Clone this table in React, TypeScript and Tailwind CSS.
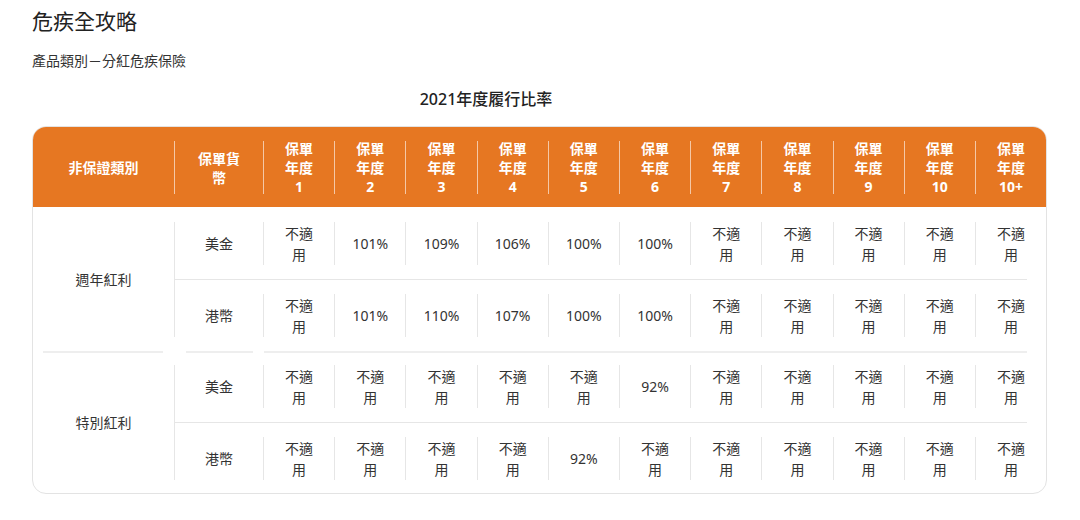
import React from "react";

const NA = "不適用";

type Row = { currency: string; values: string[] };
type Group = { label: string; rows: Row[] };

const years = ["1", "2", "3", "4", "5", "6", "7", "8", "9", "10", "10+"];

const groups: Group[] = [
  {
    label: "週年紅利",
    rows: [
      { currency: "美金", values: [NA, "101%", "109%", "106%", "100%", "100%", NA, NA, NA, NA, NA] },
      { currency: "港幣", values: [NA, "101%", "110%", "107%", "100%", "100%", NA, NA, NA, NA, NA] },
    ],
  },
  {
    label: "特別紅利",
    rows: [
      { currency: "美金", values: [NA, NA, NA, NA, NA, "92%", NA, NA, NA, NA, NA] },
      { currency: "港幣", values: [NA, NA, NA, NA, "92%", NA, NA, NA, NA, NA, NA] },
    ],
  },
];

function Cell({ value }: { value: string }) {
  // "不適用" wraps after two characters in the narrow year columns
  return (
    <div className="flex-1 h-[43px] border-l border-[#e6e6e6] flex items-center justify-center text-center leading-[21px]">
      {value === NA ? (
        <span>
          不適
          <br />用
        </span>
      ) : (
        value
      )}
    </div>
  );
}

function DataRow({ row }: { row: Row }) {
  return (
    <div className="flex">
      <div className="w-[88px] h-[43px] flex items-center justify-center">{row.currency}</div>
      {row.values.map((v, i) => (
        <Cell key={i} value={v} />
      ))}
    </div>
  );
}

function GroupBlock({ group }: { group: Group }) {
  return (
    <div className="flex">
      <div className="w-[141px] flex items-center justify-center">{group.label}</div>
      <div className="flex-1 border-l border-[#e6e6e6] flex flex-col">
        <DataRow row={group.rows[0]} />
        <div className="h-[14px]" />
        <div className="h-px bg-[#e6e6e6] mr-[19px]" />
        <div className="h-[14px]" />
        <DataRow row={group.rows[1]} />
      </div>
    </div>
  );
}

export default function App() {
  return (
    <div
      className="min-h-screen bg-white pl-[32px] pt-[7px] text-[#222]"
      style={{ fontFamily: '"Noto Sans", "Noto Sans CJK TC", sans-serif' }}
    >
      <h1 className="text-[21px] leading-[28px] font-normal">危疾全攻略</h1>
      <p className="mt-[16px] text-[14px] leading-[20px] text-[#333]">產品類別－分紅危疾保險</p>
      <div className="mt-[17px] w-[908px] text-center text-[16px] leading-[22px] font-medium">
        2021年度履行比率
      </div>

      <div className="mt-[16px] w-[1015px] rounded-[14px] border border-[#e3e3e3] overflow-hidden text-[14px] text-[#333]">
        {/* header */}
        <div className="flex bg-[#e67722] pt-[14px] pb-[13px] text-white font-bold">
          <div className="w-[141px] h-[53px] flex items-center justify-center">非保證類別</div>
          <div className="w-[89px] h-[53px] border-l border-white/60 flex items-center justify-center text-center leading-[19px]">
            <span>
              保單貨
              <br />幣
            </span>
          </div>
          {years.map((y) => (
            <div
              key={y}
              className="flex-1 h-[53px] border-l border-white/60 flex items-center justify-center text-center leading-[19px]"
            >
              <span>
                保單
                <br />
                年度
                <br />
                {y}
              </span>
            </div>
          ))}
        </div>

        {/* body */}
        <div className="pt-[15px] pb-[13px]">
          <GroupBlock group={groups[0]} />
          <div className="flex pt-[14px] pb-[12px]">
            <div className="w-[141px] pl-[10px] pr-[11px]">
              <div className="h-[2px] bg-[#eeeeee]" />
            </div>
            <div className="w-[89px] pl-[12px] pr-[10px]">
              <div className="h-[2px] bg-[#eeeeee]" />
            </div>
            <div className="flex-1 pl-px pr-[19px]">
              <div className="h-[2px] bg-[#eeeeee]" />
            </div>
          </div>
          <GroupBlock group={groups[1]} />
        </div>
      </div>
    </div>
  );
}
